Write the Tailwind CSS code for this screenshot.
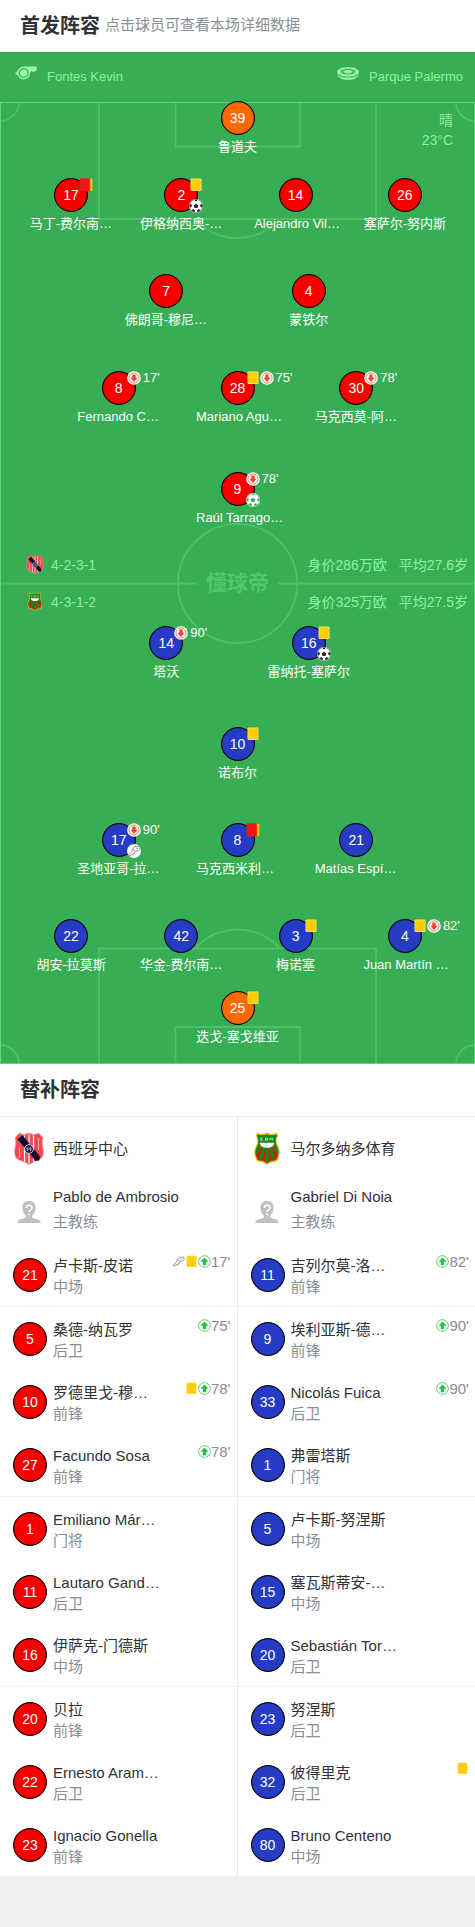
<!DOCTYPE html>
<html lang="zh-CN">
  <head>
    <meta charset="UTF-8" />
    <meta name="viewport" content="width=device-width, initial-scale=1.0" />
    <script src="https://cdn.jsdelivr.net/npm/@tailwindcss/browser@4"></script>
    <title>首发阵容</title>
  </head>
  <body class="bg-[#eeeff1] font-['Liberation_Sans','Noto_Sans_CJK_SC',sans-serif] text-[#303236]">
    <!-- icons -->
    <svg class="hidden" aria-hidden="true">
      <symbol id="yellow" viewBox="0 0 14 14">
        <rect x="1.5" y="0.5" width="11" height="12.5" rx="1.2" fill="#ffe37a" />
        <rect x="2.3" y="1.3" width="9.4" height="11" rx="0.6" fill="#ffcd00" />
      </symbol>
      <symbol id="red2" viewBox="0 0 14 14">
        <rect x="5" y="0.7" width="8.4" height="12.3" rx="1.2" fill="#ffc400" />
        <rect x="0.8" y="0.4" width="10" height="12.8" rx="1.2" fill="#f01616" stroke="#d8281c" stroke-width="0.5" />
      </symbol>
      <symbol id="down" viewBox="0 0 14 14">
        <circle cx="7" cy="7" r="6.8" fill="#fff" />
        <circle cx="7" cy="7" r="5.1" fill="none" stroke="#f2604a" stroke-width="0.8" />
        <path d="M5.3 3.5h3.4v3.2h1.9L7 11 3.4 6.7h1.9z" fill="#f8432c" />
      </symbol>
      <symbol id="up" viewBox="0 0 14 14">
        <circle cx="7" cy="7" r="6.3" fill="#fff" stroke="#3cc45a" stroke-width="0.9" />
        <path d="M5.200 11h3.600V7.400h2.600L7 2.600 2.600 7.400h2.600z" fill="#22c343" />
      </symbol>
      <symbol id="ball" viewBox="0 0 14 14">
        <circle cx="7" cy="7" r="6.6" fill="#fff" stroke="currentColor" stroke-width="0.5" />
        <path d="M7 4.7l2.3 1.7-.9 2.7H5.6l-.9-2.7zM5 .8h4L7 2.6zM.7 5.2L3 5.5 2.5 7.8.6 8.4zM13.3 5.2L11 5.5l.5 2.3 1.9.6zM2.5 11.6l1.7-1.7 1.8 1.6-.6 1.7zM11.5 11.6L9.8 9.9 8 11.5l.6 1.7z" fill="currentColor" />
      </symbol>
      <symbol id="boot" viewBox="0 0 14 14">
        <path d="M1.200 10.800C3.500 9.500 5 7.800 5.600 4.800L7.800 2.500l4.700-.3c.8 1.600.6 3.200-.7 4.200L8.800 7.300 6.800 9.800 2.600 11.800z" fill="#f4f4f4" stroke="#8c8c8c" stroke-width="0.9" stroke-linejoin="round" />
        <path d="M6 5l2.400 1.800M9 4.200l2 .2M3 11.600l-.6 1.100M6.200 10.200l.2 1.300" fill="none" stroke="#8c8c8c" stroke-width="0.800" />
      </symbol>
      <symbol id="whistle" viewBox="0 0 22 14">
        <path d="M9 .5h12.800L21.400 4.800 18.200 6l-2-.9L14.500 8zM0 7.400L3 4.400v5.400z" />
        <circle cx="8.700" cy="7" r="6.400" />
        <circle cx="8.700" cy="7" r="4.400" fill="none" stroke="#37ae54" stroke-width="1.200" />
      </symbol>
      <symbol id="stadium" viewBox="0 0 22 13">
        <path fill-rule="evenodd" d="M11 0C17 0 22 2.200 22 5s-5 4.600-11 4.600S0 7.800 0 5 5 0 11 0zm0 2C7.300 2 4.200 3 4.200 4.700S7.300 7.400 11 7.400s6.800-1 6.800-2.700S14.700 2 11 2z" />
        <path d="M6 4.700L9 3h4l3 1.700L13 6.400H9z" />
        <path d="M.3 7.400C2 9.600 6.500 10.600 11 10.600s9-1 10.700-3.200C21 10.600 16.500 12.800 11 12.800S1 10.600.3 7.400z" />
        <path d="M8 .3l.8 1.800M14 .3l-.8 1.800M2.500 2.500l2.300 1M19.500 2.500l-2.300 1M3 7.300l2-1M19 7.300l-2-1" stroke="#37ae54" stroke-width="0.600" />
      </symbol>
      <symbol id="coach" viewBox="0 0 24 24">
        <path d="M12 1c4 0 6.700 2.700 6.700 6.600 0 3.400-1.600 6.700-3.700 8.200v1.600l6 2c1.600.6 2.500 1.700 2.700 3.600H.3c.2-1.900 1.100-3 2.700-3.600l6-2v-1.600c-2.100-1.500-3.700-4.800-3.700-8.200C5.300 3.700 8 1 12 1z" fill="#c1c1c1" />
        <path d="M9.300 8c0-3.600 5.700-3.400 5.700-.2 0 2-2.900 2-2.900 4.200" fill="none" stroke="#fff" stroke-width="1.500" />
        <circle cx="12.100" cy="14.200" r="1" fill="#fff" />
      </symbol>
      <symbol id="crest-home" viewBox="0 0 30 33">
        <path d="M5.500 1L10 2.800 15 1l5 1.800L24.500 1 29 5.800C27.600 9 28.300 12 29 15.500c.5 3.500.6 6.500-.6 9.300-2 3.400-6.400 4.200-9.400 5.400L15 32.500l-4-2.300c-3-1.200-7.400-2-9.400-5.400C.4 22 .5 19 1 15.500 1.700 12 2.400 9 1 5.800z" fill="#f04a50" stroke="#f79a9c" stroke-width="0.800" />
        <path d="M10.500 3.500v26M15 2.500v29M19.500 3.500v26" stroke="#fff" stroke-width="1.200" />
        <path d="M5.500 15v11M24.500 6v12" stroke="#f9b5b6" stroke-width="1" />
        <path d="M3.600 7.300L8.600 3.200 26 24.500l-.8 4-3.800.2z" fill="#0d0b33" />
        <circle cx="15" cy="17" r="4.400" fill="#1a1740" stroke="#d9dbe8" stroke-width="0.900" />
        <path d="M13.200 14.800v4.400M16.800 14.800v4.400M13.200 17h3.600" stroke="#d9dbe8" stroke-width="0.800" />
      </symbol>
      <symbol id="crest-away" viewBox="0 0 26 33">
        <path id="away-shape" d="M3.200.8C6 2 9.500 2 13 .8c3.500 1.200 7 1.200 9.800 0l1.600 2.600c-1.900 2.500-2.300 5.100-1.400 8.100.9 2.600 2.700 4.700 2.700 8.500 0 3.200-1 5.800-2 8.200-1.600 2.200-4.200 1.600-6.200 2.200L13 32.600l-4.500-2.200c-2-.6-4.600 0-6.200-2.200-1-2.400-2-5-2-8.200 0-3.800 1.800-5.900 2.700-8.500.9-3 .5-5.600-1.400-8.100z" fill="#e6bd22" />
        <path d="M3.800 2.500c2.900 1 6 .8 9.200-.2 3.200 1 6.300 1.200 9.200.2l.8 1.200c-1.400 2.500-1.700 5-1 7.800H4c.7-2.800.4-5.300-1-7.800z" fill="#118a1b" />
        <path d="M4.400 11.500h17.200c.8 2.800 2.800 5 2.800 8.500 0 2.800-.8 5-1.700 7.200-1.500 1.500-3.700 1.200-5.700 1.900l-4 2.100-4-2.100c-2-.7-4.200-.4-5.700-1.900C2.400 25 1.600 22.800 1.600 20c0-3.500 2-5.700 2.800-8.500z" fill="#e4140c" />
        <path d="M4.400 11.500L8 14.500 2 23c-.7-3.500-.4-5.500 1-8zM21.600 11.500L18 14.500l6 8.500c.7-3.500.4-5.500-1-8zM9 15L4.200 26.800l4 1.600L11.500 16zM17 15l4.800 11.800-4 1.600L14.500 16zM12 16h2l1.200 13.800L13 31l-2.200-1.200z" fill="#118a1b" />
        <path d="M6 10.800h14c.2 3-2.600 5-7 5s-7.200-2-7-5z" fill="#fff" />
        <path d="M8.600 6H6.800v2.400h1.800M11.500 6h1.800v2.400h-1.800zM16 8.500V6l1.200 1.200L18.400 6v2.500" fill="none" stroke="#d8f2d9" stroke-width="0.800" />
      </symbol>
    </svg>

    <header class="flex h-[52px] items-center border-b border-[#eeeeee] bg-white px-5">
      <h1 class="text-xl font-bold">首发阵容</h1>
      <p class="ml-[5px] text-[15px] text-[#888e96]">点击球员可查看本场详细数据</p>
    </header>

    <main>
      <section class="bg-[#37ae54]">
        <div class="flex h-[50px] items-center justify-between pr-3 pl-[15px] text-[13px] text-[#8ff0a2]">
          <div class="flex items-center gap-2.5">
            <svg class="mb-2 h-3.5 w-[22px] fill-[#9cf5ae]" role="img" aria-label="裁判"><use href="#whistle" /></svg>
            <span>Fontes Kevin</span>
          </div>
          <div class="flex items-center gap-2.5">
            <svg class="mb-2 h-[13px] w-[22px] fill-[#9cf5ae]" role="img" aria-label="球场"><use href="#stadium" /></svg>
            <span>Parque Palermo</span>
          </div>
        </div>

        <div class="relative flow-root">
          <!-- pitch markings -->
          <svg class="absolute inset-0 size-full" viewBox="0 0 475 962" preserveAspectRatio="none" fill="none" stroke="#4dc068" stroke-width="1.8" aria-hidden="true">
            <path d="M99 0v117h277V0M175.500 0v44.500H300V0M195 117a57 57 0 0 0 85 0M0 19A19 19 0 0 0 19 0M456 0a19 19 0 0 0 19 19" />
            <path d="M99 962V846.500h277V962M175.500 962V925H300v37M195 846.500a57 57 0 0 1 85 0M0 943a19 19 0 0 1 19 19M456 962a19 19 0 0 1 19-19" />
            <path d="M0 481.500h197M278 481.500h197" />
            <circle cx="237.500" cy="481.500" r="59.500" />
            <rect x="0.500" y="0.500" width="474" height="961" stroke="#5dd87b" stroke-width="1" />
          </svg>
          <div class="absolute top-2 right-[22px] text-right text-sm leading-5 text-[#8ff0a2]">
            <p>晴</p>
            <p>23°C</p>
          </div>

          <div id="home" class="relative -mt-px"></div>

          <div class="relative mt-[18px] text-sm text-[#8ff0a2]">
            <div class="flex h-[37px] items-center pr-[7px] pl-[26px]">
              <svg class="h-[19px] w-[18px]" role="img" aria-label="西班牙中心"><use href="#crest-home" /></svg>
              <span class="ml-[7px]">4-2-3-1</span>
              <span class="ml-auto">身价286万欧</span>
              <span class="ml-3">平均27.6岁</span>
            </div>
            <div class="flex h-[37px] items-center pr-[7px] pl-[26px]">
              <svg class="h-[19px] w-[18px]" role="img" aria-label="马尔多纳多体育"><use href="#crest-away" /></svg>
              <span class="ml-[7px]">4-3-1-2</span>
              <span class="ml-auto">身价325万欧</span>
              <span class="ml-3">平均27.5岁</span>
            </div>
            <div class="absolute inset-0 flex items-center justify-center text-[21px] font-bold text-[#4dc96b]">懂球帝</div>
          </div>

          <div id="away" class="relative mt-1.5 mb-[17px]"></div>
        </div>
      </section>

      <section class="bg-white">
        <h2 class="flex h-[53px] items-center border-b border-[#eeeeee] px-5 text-xl font-bold">替补阵容</h2>
        <div class="grid grid-cols-2">
          <div class="border-r border-[#e9eaec]">
            <div class="flex h-[63px] items-center gap-[9px] pl-3.5">
              <svg class="h-[33px] w-[30px]" aria-hidden="true"><use href="#crest-home" /></svg>
              <h3 class="mt-0.5 text-[15px]">西班牙中心</h3>
            </div>
            <div class="flex h-[63px] items-center gap-3 pl-[17px]">
              <svg class="size-6" aria-hidden="true"><use href="#coach" /></svg>
              <div class="mb-1.5 text-[15px] leading-[25px]">
                <p>Pablo de Ambrosio</p>
                <p class="text-[#888e96]">主教练</p>
              </div>
            </div>
            <ul id="home-subs"></ul>
          </div>
          <div>
            <div class="flex h-[63px] items-center gap-[9px] pl-3.5">
              <svg class="h-[33px] w-[30px]" aria-hidden="true"><use href="#crest-away" /></svg>
              <h3 class="mt-0.5 text-[15px]">马尔多纳多体育</h3>
            </div>
            <div class="flex h-[63px] items-center gap-3 pl-[17px]">
              <svg class="size-6" aria-hidden="true"><use href="#coach" /></svg>
              <div class="mb-1.5 text-[15px] leading-[25px]">
                <p>Gabriel Di Noia</p>
                <p class="text-[#888e96]">主教练</p>
              </div>
            </div>
            <ul id="away-subs"></ul>
          </div>
        </div>
      </section>
    </main>
    <footer class="h-[50px]"></footer>

    <script>
      const red = "bg-[#f60000]"
      const blue = "bg-[#263cc4]"
      const orange = "bg-[#ff6a00]"

      // row layouts by number of players
      const grids = {
        1: "grid grid-cols-1",
        2: "grid grid-cols-2 px-[20%]",
        3: "grid grid-cols-3 px-[12.5%]",
        4: "grid grid-cols-[110fr_110fr_118fr_100fr] pl-4 pr-5",
      }

      const homeRows = [
        { gap: "", players: [{ n: 39, name: "鲁道夫", color: orange }] },
        {
          gap: "mt-[21px]",
          players: [
            { n: 17, name: "马丁-费尔南…", icons: ["red2"] },
            { n: 2, name: "伊格纳西奥-…", icons: ["yellow"], extra: "ball" },
            { n: 14, name: "Alejandro Vil…" },
            { n: 26, name: "塞萨尔-努内斯" },
          ],
        },
        { gap: "mt-10", players: [{ n: 7, name: "佛朗哥-穆尼…" }, { n: 4, name: "蒙铁尔" }] },
        {
          gap: "mt-[41px]",
          players: [
            { n: 8, name: "Fernando C…", icons: ["down"], time: "17'" },
            { n: 28, name: "Mariano Agu…", icons: ["yellow", "down"], time: "75'" },
            { n: 30, name: "马克西莫-阿…", icons: ["down"], time: "78'" },
          ],
        },
        { gap: "mt-[45px]", players: [{ n: 9, name: "Raúl Tarrago…", icons: ["down"], time: "78'", extra: "ball", extraColor: "text-[#2fae50]" }] },
      ]

      const awayRows = [
        {
          gap: "",
          players: [
            { n: 14, name: "塔沃", icons: ["down"], time: "90'" },
            { n: 16, name: "雷纳托-塞萨尔", icons: ["yellow"], extra: "ball" },
          ],
        },
        { gap: "mt-[45px]", players: [{ n: 10, name: "诺布尔", icons: ["yellow"] }] },
        {
          gap: "mt-10",
          players: [
            { n: 17, name: "圣地亚哥-拉…", icons: ["down"], time: "90'", extra: "boot" },
            { n: 8, name: "马克西米利…", icons: ["red2"] },
            { n: 21, name: "Matías Espí…" },
          ],
        },
        {
          gap: "mt-10",
          players: [
            { n: 22, name: "胡安-拉莫斯" },
            { n: 42, name: "华金-费尔南…" },
            { n: 3, name: "梅诺塞", icons: ["yellow"] },
            { n: 4, name: "Juan Martín …", icons: ["yellow", "down"], time: "82'" },
          ],
        },
        { gap: "mt-4", players: [{ n: 25, name: "迭戈-塞戈维亚", color: orange, icons: ["yellow"] }] },
      ]

      const homeSubs = [
        { n: 21, name: "卢卡斯-皮诺", role: "中场", icons: ["boot", "yellow", "up"], time: "17'" },
        { n: 5, name: "桑德-纳瓦罗", role: "后卫", icons: ["up"], time: "75'" },
        { n: 10, name: "罗德里戈-穆…", role: "前锋", icons: ["yellow", "up"], time: "78'" },
        { n: 27, name: "Facundo Sosa", role: "前锋", icons: ["up"], time: "78'" },
        { n: 1, name: "Emiliano Már…", role: "门将" },
        { n: 11, name: "Lautaro Gand…", role: "后卫" },
        { n: 16, name: "伊萨克-门德斯", role: "中场" },
        { n: 20, name: "贝拉", role: "前锋" },
        { n: 22, name: "Ernesto Aram…", role: "后卫" },
        { n: 23, name: "Ignacio Gonella", role: "前锋" },
      ]

      const awaySubs = [
        { n: 11, name: "吉列尔莫-洛…", role: "前锋", icons: ["up"], time: "82'" },
        { n: 9, name: "埃利亚斯-德…", role: "前锋", icons: ["up"], time: "90'" },
        { n: 33, name: "Nicolás Fuica", role: "后卫", icons: ["up"], time: "90'" },
        { n: 1, name: "弗雷塔斯", role: "门将" },
        { n: 5, name: "卢卡斯-努涅斯", role: "中场" },
        { n: 15, name: "塞瓦斯蒂安-…", role: "中场" },
        { n: 20, name: "Sebastián Tor…", role: "后卫" },
        { n: 23, name: "努涅斯", role: "后卫" },
        { n: 32, name: "彼得里克", role: "后卫", icons: ["yellow"] },
        { n: 80, name: "Bruno Centeno", role: "中场" },
      ]

      const player = (p, color) => `
        <a href="#player-${p.n}" class="flex flex-col items-center text-white">
          <span class="relative flex size-[34px] items-center justify-center rounded-full border border-black inset-shadow-[0_0_1px_#000] text-sm ${p.color || color}">
            ${p.n}
            <span class="absolute -top-px left-6 flex items-center text-[13px] leading-[14px]">
              ${(p.icons || []).map((i) => `<svg class="size-3.5 shrink-0"><use href="#${i}" /></svg>`).join("")}
              ${p.time ? `<span class="ml-0.5">${p.time}</span>` : ""}
            </span>
            ${p.extra ? `<svg class="absolute -bottom-0.5 left-6 size-3.5 rounded-full bg-white ${p.extraColor || "text-[#222222]"}"><use href="#${p.extra}" /></svg>` : ""}
          </span>
          <span class="mt-0.5 w-[83px] text-[13px] leading-5 whitespace-nowrap ${p.name.endsWith("…") ? "text-left" : "text-center"}">${p.name}</span>
        </a>`

      const renderRows = (id, rows, color) => {
        document.querySelector(id).innerHTML = rows
          .map((r) => `<div class="${grids[r.players.length]} ${r.gap}">${r.players.map((p) => player(p, color)).join("")}</div>`)
          .join("")
      }

      // a divider after the first row, then after every third one
      const renderSubs = (id, subs, color) => {
        document.querySelector(id).innerHTML = subs
          .map((p, i) => `
            <li class="${i % 3 === 0 ? "border-b border-[#f3f4f5]" : ""}">
              <a href="#sub-${p.n}" class="flex h-[63px] items-center pr-1.5 pl-[13px]">
                <span class="flex size-[34px] shrink-0 items-center justify-center rounded-full border border-black inset-shadow-[0_0_1px_#000] text-sm text-white ${color}">${p.n}</span>
                <span class="mt-0.5 ml-1.5 text-[15px] leading-[21px] whitespace-nowrap">
                  <span class="block">${p.name}</span>
                  <span class="block text-[#888e96]">${p.role}</span>
                </span>
                <span class="mb-[26px] ml-auto flex items-center text-[15px] leading-4 text-[#8c8c8c]">
                  ${(p.icons || []).map((i) => `<svg class="size-[13px]"><use href="#${i}" /></svg>`).join("")}
                  ${p.time ? `<span>${p.time}</span>` : ""}
                </span>
              </a>
            </li>`)
          .join("")
      }

      renderRows("#home", homeRows, red)
      renderRows("#away", awayRows, blue)
      renderSubs("#home-subs", homeSubs, red)
      renderSubs("#away-subs", awaySubs, blue)
    </script>
  </body>
</html>
